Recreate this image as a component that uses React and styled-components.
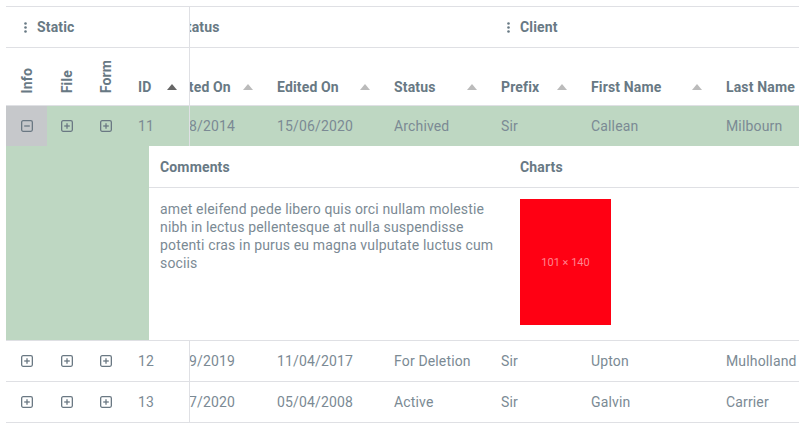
import { useLayoutEffect, useRef } from "react";
import styled, { createGlobalStyle } from "styled-components";

const SCROLL_X = 43;
const LINE = "#dfe0e4";
const GREEN = "#bed7c2";
const HEAD = "#687984";
const TEXT = "#7b8a94";

const GlobalStyle = createGlobalStyle`
  html, body { margin: 0; background: #fff; }
  body { font-family: Roboto, "Noto Sans", sans-serif; }
`;

const Page = styled.div`
  padding: 6px 0 0 6px;
  overflow: hidden;
  width: 793px;
`;

const Table = styled.div`
  border-top: 1px solid ${LINE};
  font-size: 14px;
  letter-spacing: 0.15px;
  color: ${TEXT};
`;

const Row = styled.div`
  display: flex;
  height: ${(p) => p.$h}px;
  border-bottom: ${(p) => (p.$noLine ? "none" : `1px solid ${LINE}`)};
  background: ${(p) => p.$bg || "#fff"};
`;

const Frozen = styled.div`
  display: flex;
  width: 183px;
  flex-shrink: 0;
  border-right: 1px solid ${LINE};
`;

const ScrollWindow = styled.div`
  flex: 1;
  min-width: 0;
  overflow: hidden;
`;

const Track = styled.div`
  display: flex;
  width: max-content;
  height: 100%;
`;

const Cell = styled.div`
  width: ${(p) => p.$w}px;
  flex-shrink: 0;
  display: flex;
  align-items: center;
  justify-content: ${(p) => (p.$center ? "center" : "flex-start")};
  padding: ${(p) => (p.$center ? "0" : "0 12px")};
  box-sizing: border-box;
  white-space: nowrap;
  overflow: hidden;
  background: ${(p) => p.$bg || "transparent"};
`;

const GroupCell = styled(Cell)`
  padding-left: 18px;
  font-weight: 700;
  color: ${HEAD};
  gap: 10px;
`;

const HeadCell = styled(Cell)`
  align-items: flex-end;
  justify-content: space-between;
  padding-bottom: 10px;
  font-weight: 700;
  color: ${HEAD};
`;

const VerticalHead = styled(Cell)`
  align-items: flex-end;
  padding-bottom: 12px;
  font-weight: 700;
  color: ${HEAD};
`;

const VerticalText = styled.span`
  writing-mode: vertical-rl;
  transform: rotate(180deg);
  line-height: 14px;
`;

const SortArrow = styled.span`
  width: 0;
  height: 0;
  margin-bottom: 5px;
  border-left: 5px solid transparent;
  border-right: 5px solid transparent;
  border-bottom: 6px solid ${(p) => (p.$active ? "#666" : "#bbb")};
`;

const DetailGutter = styled.div`
  width: 143px;
  flex-shrink: 0;
  background: ${GREEN};
`;

const DetailPanel = styled.div`
  flex: 1;
  display: grid;
  grid-template-columns: 360px 1fr;
  grid-template-rows: 42px 1fr;
  background: #fff;
`;

const PanelHead = styled.div`
  display: flex;
  align-items: center;
  padding: 0 11px;
  border-bottom: 1px solid ${LINE};
  font-weight: 700;
  color: ${HEAD};
`;

const Comment = styled.p`
  margin: 0;
  padding: 12px 11px 0;
  line-height: 18px;
`;

const ChartBody = styled.div`
  padding: 11px 11px 0;
`;

const Placeholder = styled.div`
  width: 91px;
  height: 126px;
  background: #ff0013;
  color: #ff8590;
  font-size: 11px;
  letter-spacing: 0;
  display: flex;
  align-items: center;
  justify-content: center;
`;

function Scroller({ children }) {
  const ref = useRef(null);
  useLayoutEffect(() => {
    ref.current.scrollLeft = SCROLL_X;
  }, []);
  return (
    <ScrollWindow ref={ref}>
      <Track>{children}</Track>
    </ScrollWindow>
  );
}

function MenuDots() {
  return (
    <svg width="3" height="11" viewBox="0 0 3 11">
      <circle cx="1.5" cy="1.5" r="1.3" fill={HEAD} />
      <circle cx="1.5" cy="5.5" r="1.3" fill={HEAD} />
      <circle cx="1.5" cy="9.5" r="1.3" fill={HEAD} />
    </svg>
  );
}

function Toggle({ open }) {
  return (
    <svg width="12" height="12" viewBox="0 0 12 12" fill="none" stroke="#6a7883" strokeWidth="1.3">
      <rect x="0.65" y="0.65" width="10.7" height="10.7" rx="1.5" />
      <path d="M3.2 6h5.6" />
      {!open && <path d="M6 3.2v5.6" />}
    </svg>
  );
}

const frozenCols = [
  { key: "info", title: "Info", w: 41 },
  { key: "file", title: "File", w: 39 },
  { key: "form", title: "Form", w: 40 },
];

const cols = [
  { key: "created", title: "Created On", w: 118 },
  { key: "edited", title: "Edited On", w: 117 },
  { key: "status", title: "Status", w: 107 },
  { key: "prefix", title: "Prefix", w: 90 },
  { key: "first", title: "First Name", w: 135 },
  { key: "last", title: "Last Name", w: 140 },
];

const rows = [
  { id: 11, created: "15/08/2014", edited: "15/06/2020", status: "Archived", prefix: "Sir", first: "Callean", last: "Milbourn", open: true },
  { id: 12, created: "13/09/2019", edited: "11/04/2017", status: "For Deletion", prefix: "Sir", first: "Upton", last: "Mulholland" },
  { id: 13, created: "27/07/2020", edited: "05/04/2008", status: "Active", prefix: "Sir", first: "Galvin", last: "Carrier" },
];

const comment =
  "amet eleifend pede libero quis orci nullam molestie nibh in lectus pellentesque at nulla suspendisse potenti cras in purus eu magna vulputate luctus cum sociis";

function DataRow({ row }) {
  return (
    <Row $h={40} $bg={row.open ? GREEN : null} $noLine={row.open}>
      <Frozen>
        <Cell $w={41} $center $bg={row.open ? "#c6c8cb" : null}>
          <Toggle open={row.open} />
        </Cell>
        <Cell $w={39} $center>
          <Toggle />
        </Cell>
        <Cell $w={40} $center>
          <Toggle />
        </Cell>
        <Cell $w={63}>{row.id}</Cell>
      </Frozen>
      <Scroller>
        {cols.map((c) => (
          <Cell key={c.key} $w={c.w}>
            {row[c.key]}
          </Cell>
        ))}
      </Scroller>
    </Row>
  );
}

function DetailRow() {
  return (
    <Row $h={194}>
      <DetailGutter />
      <DetailPanel>
        <PanelHead>Comments</PanelHead>
        <PanelHead>Charts</PanelHead>
        <Comment>{comment}</Comment>
        <ChartBody>
          <Placeholder>101 × 140</Placeholder>
        </ChartBody>
      </DetailPanel>
    </Row>
  );
}

export default function App() {
  return (
    <Page>
      <GlobalStyle />
      <Table>
        <Row $h={40}>
          <Frozen>
            <GroupCell $w={183}>
              <MenuDots />
              Static
            </GroupCell>
          </Frozen>
          <Scroller>
            <GroupCell $w={342}>
              <MenuDots />
              Status
            </GroupCell>
            <GroupCell $w={365}>
              <MenuDots />
              Client
            </GroupCell>
          </Scroller>
        </Row>
        <Row $h={57}>
          <Frozen>
            {frozenCols.map((c) => (
              <VerticalHead key={c.key} $w={c.w} $center>
                <VerticalText>{c.title}</VerticalText>
              </VerticalHead>
            ))}
            <HeadCell $w={63}>
              ID
              <SortArrow $active />
            </HeadCell>
          </Frozen>
          <Scroller>
            {cols.map((c) => (
              <HeadCell key={c.key} $w={c.w}>
                {c.title}
                <SortArrow />
              </HeadCell>
            ))}
          </Scroller>
        </Row>
        <DataRow row={rows[0]} />
        <DetailRow />
        <DataRow row={rows[1]} />
        <DataRow row={rows[2]} />
      </Table>
    </Page>
  );
}
